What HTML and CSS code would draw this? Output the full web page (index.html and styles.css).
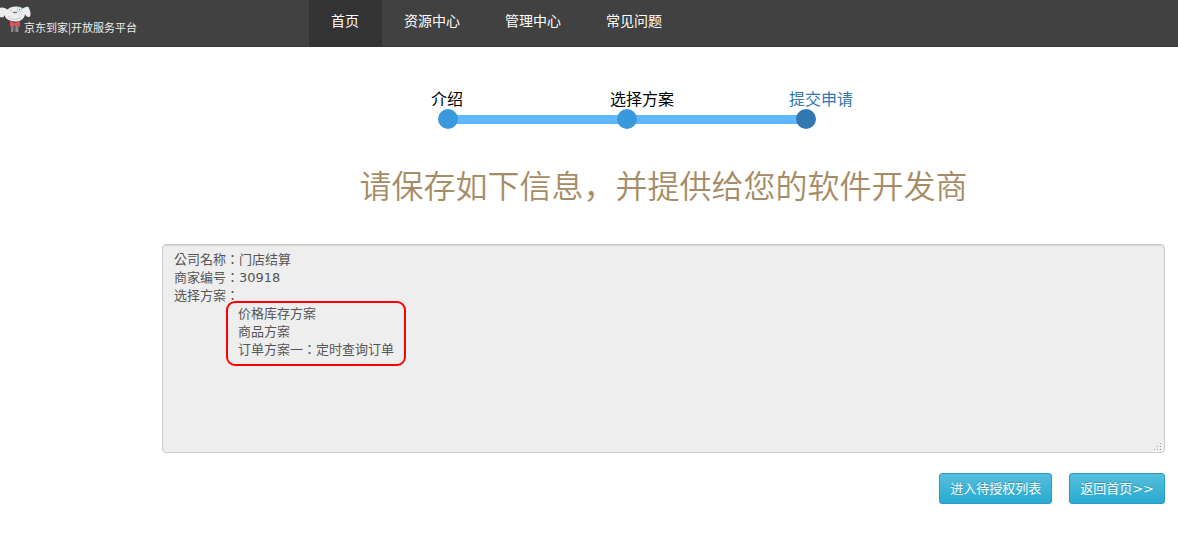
FILE: index.html
```
<!DOCTYPE html>
<html lang="zh-CN">

<head>
    <meta charset="UTF-8">
    <meta name="viewport" content="width=device-width, initial-scale=1.0">
    <title>京东到家开放服务平台</title>
    <link rel="stylesheet" href="styles.css">
</head>

<body>

    <header class="header">
        <a class="logo" href="#">
            <svg class="logo-dog" width="32" height="34" viewBox="0 0 32 34" aria-hidden="true">
                <path d="M11.500 25 L18 25 L18.500 32 L11 32 Z" fill="#8b8b8b"/>
                <path d="M13.500 25 L15.500 25 L15.500 32 L13 32 Z" fill="#555"/>
                <path d="M0 8 C2 7 5 8 7.500 9.500 C11 6 18 5.500 22.500 8.500 C25 7.500 28 5.500 29 8 C30 11 31.500 14 30 16.500 C28 18 26 16.500 25 14 C24.500 19 20 22 14.500 21.500 C9 21 5.500 19 4.500 15 C4 17.500 2 18 0 17 Z" fill="#ededed"/>
                <path d="M8 16 C11 20.500 18 20.500 21 16.500" fill="none" stroke="#c4c4c4" stroke-width="1"/>
                <circle cx="19.500" cy="9.500" r="2.300" fill="#eef8fb" stroke="#a5d3df" stroke-width="1"/>
                <circle cx="19.500" cy="9.500" r="0.700" fill="#567"/>
                <circle cx="11" cy="10.500" r="0.700" fill="#bbb"/>
                <ellipse cx="15" cy="12.500" rx="2.500" ry="0.800" fill="#777"/>
                <path d="M10 21 L14.500 23 L20 21 L20 27 L15 25.500 L10 27 Z" fill="#e0525a"/>
            </svg>
            <span class="logo-text">京东到家|开放服务平台</span>
        </a>
        <nav class="nav-bar">
            <a class="active" href="#">首页</a>
            <a href="#">资源中心</a>
            <a href="#">管理中心</a>
            <a href="#">常见问题</a>
        </nav>
    </header>

    <main class="container">
        <ol class="steps">
            <li class="step">
                <span class="step-label">介绍</span>
                <div class="step-track"><span class="step-dot"></span><span class="step-line"></span></div>
            </li>
            <li class="step">
                <span class="step-label">选择方案</span>
                <div class="step-track"><span class="step-dot"></span><span class="step-line"></span></div>
            </li>
            <li class="step current">
                <span class="step-label">提交申请</span>
                <div class="step-track"><span class="step-dot"></span></div>
            </li>
        </ol>

        <h1 class="title">请保存如下信息，并提供给您的软件开发商</h1>

        <div class="info">
            <textarea class="info-text" lang="zh-TW" aria-label="申请信息" readonly>公司名称：门店结算
商家编号：30918
选择方案：
&#9;价格库存方案
&#9;商品方案
&#9;订单方案一：定时查询订单</textarea>
            <div class="info-mark"></div>
            <svg class="info-grip" width="8" height="8" viewBox="0 0 8 8" aria-hidden="true">
                <path d="M6 0h1v1h-1z M3 3h1v1h-1z M6 3h1v1h-1z M0 6h1v1h-1z M3 6h1v1h-1z M6 6h1v1h-1z" fill="#999"/>
                <path d="M7 1h1v1h-1z M4 4h1v1h-1z M7 4h1v1h-1z M1 7h1v1h-1z M4 7h1v1h-1z M7 7h1v1h-1z" fill="#fff"/>
            </svg>
        </div>

        <div class="actions">
            <button class="btn" type="button">进入待授权列表</button>
            <button class="btn" type="button">返回首页&gt;&gt;</button>
        </div>
    </main>

</body>

</html>
```
FILE: styles.css
```
body {
    font-family: "DejaVu Sans", "Noto Sans CJK SC", sans-serif;
    font-size: 13px;
    line-height: 18px;
    margin: 0;
    background-color: #fff;
    color: #000;
}

.header {
    display: flex;
    min-height: 47px;
    background-color: #414141;
    box-shadow: inset 0 -1px 0 #383838;
}

.logo {
    display: flex;
    width: 309px;
    color: #eee;
    text-decoration: none;
}

.logo-text {
    padding: 18px 0 0;
    margin-left: -8px;
    font-family: "Noto Sans CJK SC", sans-serif;
    font-size: 11px;
}

.nav-bar {
    display: flex;
}

.nav-bar a {
    padding: 12px 23px 16px 22px;
    color: #fff;
    font-size: 14px;
    text-decoration: none;
}

.nav-bar a.active {
    background-color: #333;
}

.container {
    padding: 44px 13px 0 162px;
}

.steps {
    display: flex;
    list-style: none;
    margin: 0;
    padding: 0 0 0 269px;
}

.step {
    width: 179px;
}

.step-label {
    display: block;
    font-size: 16px;
    line-height: 18px;
}

.step-track {
    display: flex;
    align-items: center;
    margin: 0 -7px 0 7px;
}

.step-dot {
    position: relative;
    z-index: 1;
    width: 20px;
    height: 20px;
    border-radius: 50%;
    background-color: #3a99dc;
}

.step-line {
    flex: 1;
    height: 9px;
    margin: 0 -3px;
    background-color: #5fb8ff;
}

.current {
    color: #3177b0;
}

.current .step-dot {
    background-color: #3177b0;
}

.title {
    margin: 35px 0 34px;
    color: #a68c64;
    font-size: 32px;
    font-weight: 350;
    line-height: 46px;
    text-align: center;
}

.info {
    position: relative;
}

.info-text {
    display: block;
    box-sizing: border-box;
    width: 100%;
    height: 209px;
    padding: 6px 11px;
    border: 1px solid #ccc;
    border-radius: 4px;
    box-shadow: inset 0 1px 1px rgba(0, 0, 0, 0.1);
    background-color: #eee;
    color: #555;
    font-family: "DejaVu Sans", "Noto Sans CJK TC", sans-serif;
    font-size: 13px;
    line-height: 18px;
    tab-size: 64px;
    resize: none;
    outline: none;
}

/* red frame around the chosen plans */
.info-mark {
    position: absolute;
    top: 57px;
    left: 64px;
    width: 176px;
    height: 61px;
    border: 2px solid #f00;
    border-radius: 9px;
    pointer-events: none;
}

.info-grip {
    position: absolute;
    right: 3px;
    bottom: 2px;
}

.actions {
    display: flex;
    justify-content: flex-end;
    gap: 17px;
    margin-top: 20px;
}

.btn {
    padding: 6px 10px;
    border: 1px solid #2a9dbf;
    border-radius: 3px;
    background-image: linear-gradient(#55bedc, #2aabd2);
    box-shadow: 0 1px 2px rgba(0, 0, 0, 0.1);
    color: #fff;
    font-family: inherit;
    font-size: 13px;
    line-height: 17px;
    text-shadow: 0 -1px 0 rgba(0, 0, 0, 0.2);
    cursor: pointer;
}

.btn:hover {
    background-image: linear-gradient(#2aabd2, #2aabd2);
}
```
